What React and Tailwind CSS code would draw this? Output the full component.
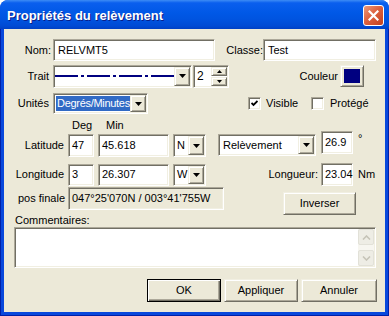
import React from "react";

const sunken =
  "border border-t-[#aca899] border-l-[#aca899] border-b-white border-r-white shadow-[inset_1px_1px_0_#716f64,inset_-1px_-1px_0_#f1efe2]";
const raised =
  "border border-t-[#f1efe2] border-l-[#f1efe2] border-b-[#716f64] border-r-[#716f64] shadow-[inset_1px_1px_0_#fff,inset_-1px_-1px_0_#aca899]";

function Arrow({ up = false, w = 7, h = 4 }) {
  return (
    <svg width={w} height={h} viewBox={`0 0 ${w} ${h}`}>
      {up ? (
        <path d={`M0 ${h}H${w}L${w / 2} 0z`} fill="#000" />
      ) : (
        <path d={`M0 0H${w}L${w / 2} ${h}z`} fill="#000" />
      )}
    </svg>
  );
}

function DropButton() {
  return (
    <div className={`w-[16px] flex items-center justify-center bg-[#ece9d8] ${raised}`}>
      <Arrow />
    </div>
  );
}

function Combo({ size, className = "", children }) {
  return (
    <div className={`flex items-stretch bg-white p-px ${sunken} ${size} ${className}`}>
      <div className="flex-1 flex items-center overflow-hidden whitespace-nowrap">{children}</div>
      <DropButton />
    </div>
  );
}

function Field({ className = "", children }) {
  return (
    <div className={`flex items-center bg-white pl-[3px] whitespace-nowrap ${sunken} ${className}`}>
      {children}
    </div>
  );
}

function Checkbox({ checked }) {
  return (
    <div className={`w-[13px] h-[13px] bg-white flex items-center justify-center ${sunken}`}>
      {checked && (
        <svg width="7" height="7" viewBox="0 0 7 7">
          <polyline points="0.5,3 2.5,5 6.5,1" fill="none" stroke="#000" strokeWidth="1.8" />
        </svg>
      )}
    </div>
  );
}

function PushButton({ children, className = "", isDefault = false }) {
  return (
    <div
      className={`h-[23px] flex items-center justify-center bg-[#ece9d8] ${
        isDefault
          ? "border border-black shadow-[inset_1px_1px_0_#fff,inset_-1px_-1px_0_#716f64,inset_-2px_-2px_0_#aca899]"
          : raised
      } ${className}`}
    >
      {children}
    </div>
  );
}

function ScrollArrow({ up }) {
  return (
    <div className="h-[16px] flex items-center justify-center bg-[#eeede5] border border-[#e2e1d8] rounded-[2px]">
      <svg width="9" height="5" viewBox="0 0 9 5">
        <polyline
          points={up ? "1,4.5 4.5,1 8,4.5" : "1,0.5 4.5,4 8,0.5"}
          fill="none"
          stroke="#c6c4b8"
          strokeWidth="1.6"
        />
      </svg>
    </div>
  );
}

export default function App() {
  return (
    <div className="w-[389px] h-[316px] flex flex-col rounded-t-[8px] overflow-hidden bg-[#0848dc] font-['Liberation_Sans',Arial,sans-serif] text-[11px] leading-[13px] text-black">
      {/* Title bar */}
      <div className="h-[29px] flex items-center pl-[7px] pr-[5px] pt-px bg-[linear-gradient(to_bottom,#3d8cf5_0%,#0a5fee_10%,#0058e6_45%,#0054e0_65%,#004ad4_90%,#0040c4_100%)]">
        <span className="flex-1 text-white font-bold text-[13px] [text-shadow:1px_1px_0_#0a1e8a]">
          Propriétés du relèvement
        </span>
        <div className="w-[21px] h-[21px] rounded-[3px] border border-white flex items-center justify-center bg-[linear-gradient(135deg,#eb9a7c_0%,#dd6240_45%,#c4401c_100%)]">
          <svg width="11" height="11" viewBox="0 0 11 11">
            <path d="M1.5 1.5L9.5 9.5M9.5 1.5L1.5 9.5" stroke="#fff" strokeWidth="2.2" strokeLinecap="square" />
          </svg>
        </div>
      </div>

      {/* Frame + body */}
      <div className="flex-1 px-[4px] pb-[4px] shadow-[inset_1px_0_0_#0020a8,inset_-1px_0_0_#0020a8,inset_0_-1px_0_#0020a8]">
        <div className="h-[283px] bg-[#ece9d8] flex flex-col">
          {/* Nom / Classe */}
          <div className="flex items-center mt-[10px] h-[22px]">
            <span className="w-[47px] text-right">Nom:</span>
            <Field className="ml-[2px] w-[162px] h-[22px] pl-[4px]">RELVMT5</Field>
            <span className="w-[48px] text-right">Classe:</span>
            <Field className="w-[113px] h-[22px] pl-[4px]">Test</Field>
          </div>

          {/* Trait / Couleur */}
          <div className="flex items-center mt-[3px] h-[24px]">
            <span className="w-[45px] text-right">Trait</span>
            <Combo size="w-[139px] h-[23px]" className="ml-[4px]">
              <svg width="119" height="4" viewBox="0 0 119 4">
                <line x1="0" y1="2" x2="119" y2="2" stroke="#000080" strokeWidth="2" strokeDasharray="23 3 3 3" />
              </svg>
            </Combo>
            <div className={`ml-[1px] w-[36px] h-[23px] bg-white flex p-px ${sunken}`}>
              <span className="flex-1 flex items-center pl-[2px] text-[12px]">2</span>
              <div className="w-[16px] flex flex-col gap-px">
                <div className={`flex-1 flex items-center justify-center bg-[#ece9d8] ${raised}`}>
                  <Arrow up w={5} h={3} />
                </div>
                <div className={`flex-1 flex items-center justify-center bg-[#ece9d8] ${raised}`}>
                  <Arrow w={5} h={3} />
                </div>
              </div>
            </div>
            <span className="w-[109px] text-right">Couleur</span>
            <div className={`ml-[2px] w-[24px] h-[22px] p-[3px] bg-[#ece9d8] ${raised}`}>
              <div className="w-full h-full bg-[#000080]" />
            </div>
          </div>

          {/* Unités / Visible / Protégé */}
          <div className="flex items-center mt-[5px] h-[21px]">
            <span className="w-[45px] text-right">Unités</span>
            <Combo size="w-[95px] h-[21px]" className="ml-[4px]">
              <span className="ml-px bg-[#316ac5] text-white px-px h-[15px] leading-[15px] tracking-[-0.3px]">
                Degrés/Minutes
              </span>
            </Combo>
            <div className="ml-[100px]">
              <Checkbox checked />
            </div>
            <span className="ml-[5px] w-[45px]">Visible</span>
            <Checkbox />
            <span className="ml-[6px]">Protégé</span>
          </div>

          {/* Deg / Min headers */}
          <div className="flex items-center mt-[4px] h-[14px]">
            <span className="ml-[68px] w-[34px]">Deg</span>
            <span>Min</span>
          </div>

          {/* Latitude */}
          <div className="flex items-start mt-[2px] h-[23px]">
            <span className="w-[60px] h-[23px] flex items-center justify-end">Latitude</span>
            <Field className="ml-[4px] w-[26px] h-[23px]">47</Field>
            <Field className="ml-[4px] w-[71px] h-[23px]">45.618</Field>
            <Combo size="w-[33px] h-[23px]" className="ml-[4px]">
              <span className="pl-[2px]">N</span>
            </Combo>
            <Combo size="w-[98px] h-[22px]" className="ml-[12px]">
              <span className="pl-[3px]">Relèvement</span>
            </Combo>
            <Field className="ml-[5px] -mt-[3px] w-[32px] h-[23px]">26.9</Field>
            <span className="ml-[5px] -mt-[2px]">°</span>
          </div>

          {/* Longitude */}
          <div className="flex items-center mt-[6px] h-[23px]">
            <span className="w-[60px] text-right">Longitude</span>
            <Field className="ml-[4px] w-[26px] h-[22px]">3</Field>
            <Field className="ml-[4px] w-[71px] h-[22px]">26.307</Field>
            <Combo size="w-[33px] h-[22px]" className="ml-[4px]">
              <span className="pl-[2px]">W</span>
            </Combo>
            <span className="w-[112px] text-right">Longueur:</span>
            <Field className="ml-[3px] w-[32px] h-[23px] pl-[2px]">23.04</Field>
            <span className="ml-[5px]">Nm</span>
          </div>

          {/* pos finale / Inverser */}
          <div className="flex items-start mt-[1px] h-[27px]">
            <span className="w-[61px] h-[23px] flex items-center justify-end">pos finale</span>
            <div className={`ml-[3px] w-[156px] h-[23px] flex items-center pl-[3px] whitespace-nowrap ${sunken}`}>
              047°25'070N / 003°41'755W
            </div>
            <PushButton className="ml-[59px] mt-[5px] w-[73px] h-[22px]">Inverser</PushButton>
          </div>

          {/* Commentaires */}
          <span className="ml-[11px] h-[13px] leading-[13px]">Commentaires:</span>
          <div className={`ml-[10px] w-[362px] h-[41px] bg-white flex justify-end p-px ${sunken}`}>
            <div className="w-[16px] flex flex-col justify-between bg-[#f7f6f0]">
              <ScrollArrow up />
              <ScrollArrow />
            </div>
          </div>

          {/* Buttons */}
          <div className="flex justify-end gap-[3px] pr-[8px] mt-[11px]">
            <PushButton isDefault className="w-[74px]">OK</PushButton>
            <PushButton className="w-[74px]">Appliquer</PushButton>
            <PushButton className="w-[76px]">Annuler</PushButton>
          </div>
        </div>
      </div>
    </div>
  );
}
